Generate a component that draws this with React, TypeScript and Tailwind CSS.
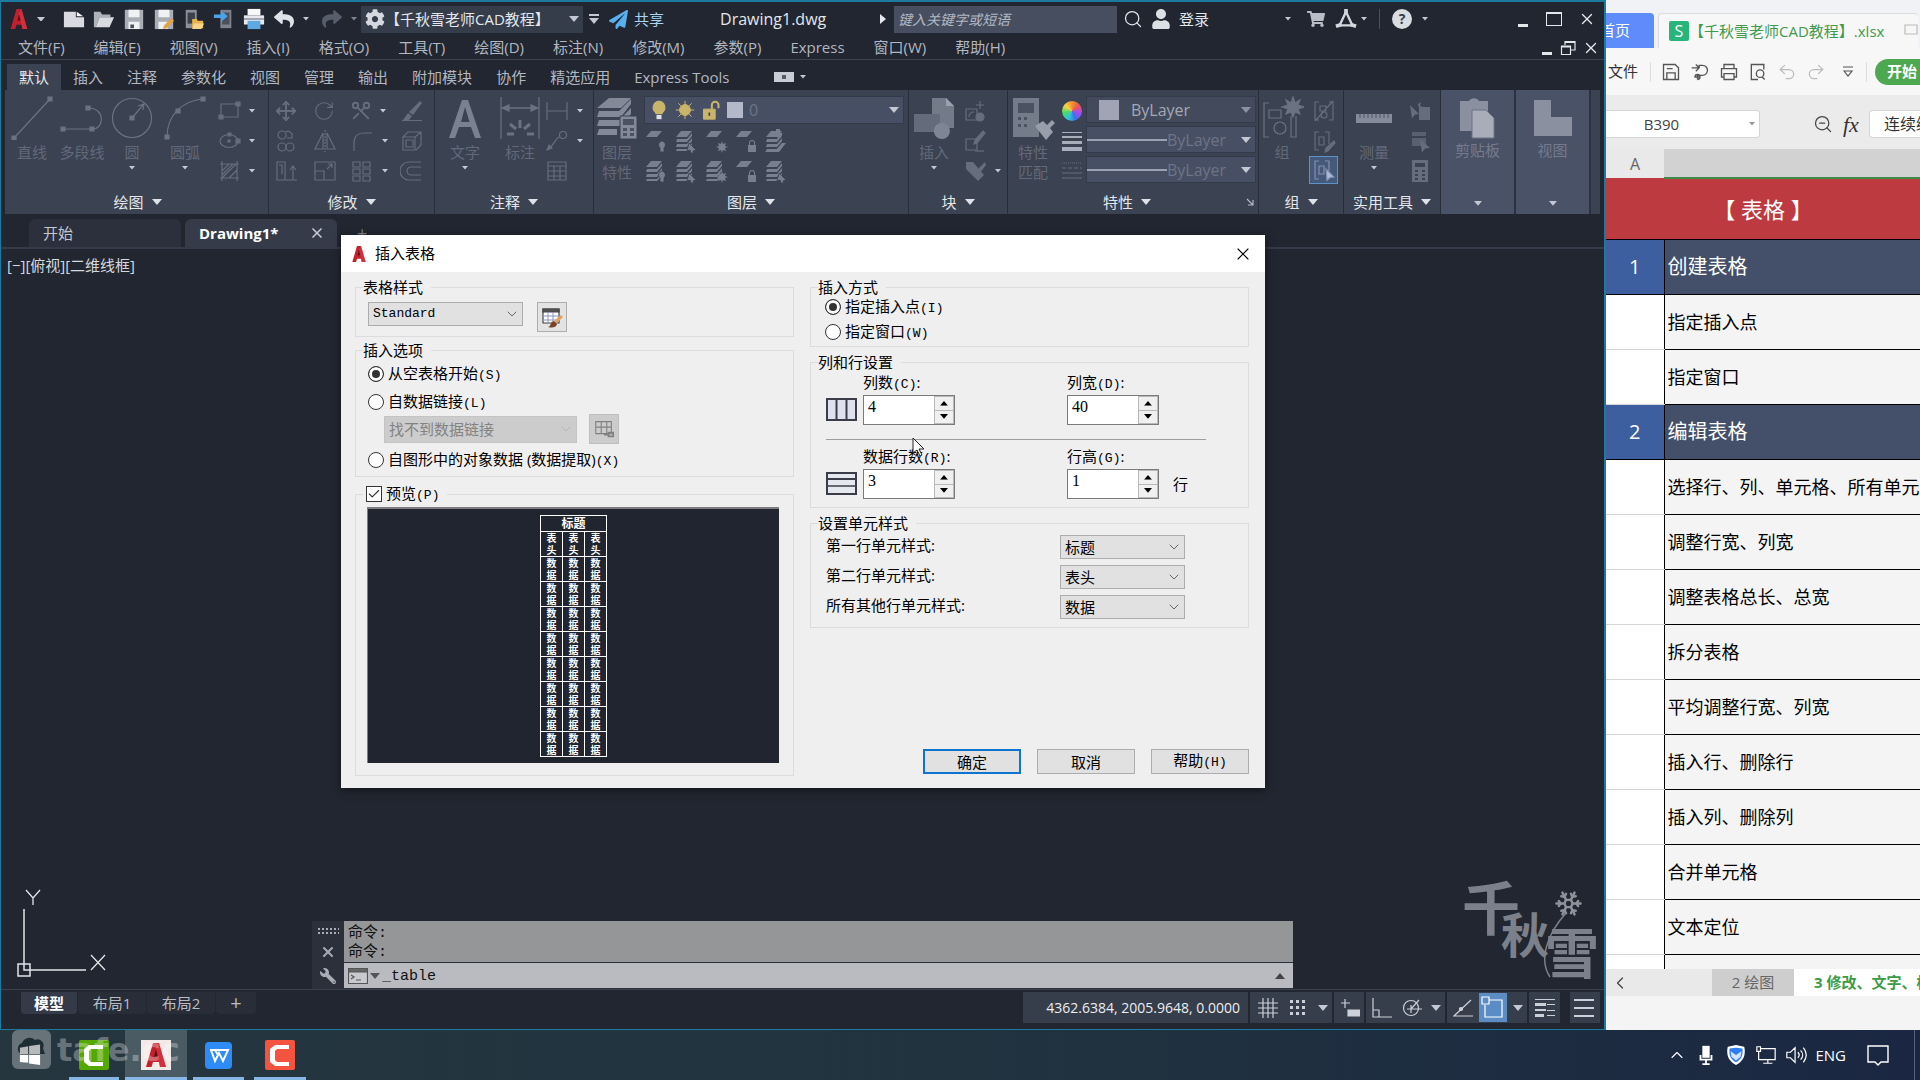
import { useState } from 'react'
import type { ReactNode } from 'react'
import { Check, ChevronDown, ChevronLeft, ChevronUp, Move, Redo2, RotateCw, Scissors, Search, Snowflake, Undo2, X, ZoomOut } from 'lucide-react'
import { FaShoppingCart, FaUser, FaReply, FaShare, FaCog, FaPaperPlane, FaWrench } from 'react-icons/fa'

type IconProps = { className?: string; children?: ReactNode; box?: string }

// outline icon, inherits colour from the parent
function Ico({ className = 'size-6', children, box = '0 0 24 24' }: IconProps) {
    return (
        <svg className={`shrink-0 ${className}`} viewBox={box} fill="none" stroke="currentColor" strokeWidth="1.2" aria-hidden="true">
            {children}
        </svg>
    )
}

// filled icon
function Solid({ className = 'size-6', children, box = '0 0 24 24' }: IconProps) {
    return (
        <svg className={`shrink-0 ${className}`} viewBox={box} fill="currentColor" aria-hidden="true">
            {children}
        </svg>
    )
}

function Caret({ className = 'w-2', color = 'text-[#c3c8d2]' }: { className?: string; color?: string }) {
    return (
        <svg className={`shrink-0 ${className} ${color}`} viewBox="0 0 10 6" fill="currentColor" aria-hidden="true">
            <path d="M0 0h10L5 6z" />
        </svg>
    )
}

function AcadLogo({ className = 'h-5 w-4' }: { className?: string }) {
    return (
        <svg className={`shrink-0 ${className}`} viewBox="0 0 20 24" aria-hidden="true">
            <path d="M7 0h6l7 24h-6l-1-5H7l-1.500 5H0z" fill="#c3202e" />
            <path d="M10 6l2 8H8z" fill="#5f0d15" />
            <path d="M13 0l7 24h-6L10 5z" fill="#e0434d" opacity=".45" />
        </svg>
    )
}

/* ---------- title bar ---------- */

const quickAccess: { name: string; icon: ReactNode }[] = [
    {
        name: '新建',
        icon: (
            <Solid className="size-5.5 text-[#d9dbe0]">
                <path d="M1 4h13v6h9v11H1z" />
                <path d="M15 4l7 5h-7z" fill="#f5f6f8" />
            </Solid>
        ),
    },
    {
        name: '打开',
        icon: (
            <Solid className="size-5.5 text-[#d9dbe0]">
                <path d="M1 4h7l2 3h9v3H7L3 21H1z" fill="#aeb2ba" />
                <path d="M7 10h16l-5 11H3z" />
            </Solid>
        ),
    },
    {
        name: '保存',
        icon: (
            <Solid className="size-5.5 text-[#a9adb5]">
                <path d="M2 2h20v21H2z" />
                <path d="M6 2h12v8H6zM6 15h12v8H6z" fill="#f0f1f3" />
                <path d="M8 18h4v4H8z" fill="#4a505c" />
            </Solid>
        ),
    },
    {
        name: '另存为',
        icon: (
            <Solid className="size-5.5 text-[#a9adb5]">
                <path d="M2 2h20v21H2z" />
                <path d="M6 2h12v8H6zM6 15h10v8H6z" fill="#f0f1f3" />
                <path d="M20 11l3 3-8 8-4 1 1-4z" fill="#e3a447" />
            </Solid>
        ),
    },
    {
        name: '从移动设备打开',
        icon: (
            <Solid className="size-5.5 text-[#8b8f98]">
                <path d="M3 2h12v20H3z" />
                <path d="M5 5h8v12H5z" fill="#3a404c" />
                <path d="M10 12h5l1 2h6v8H10z" fill="#e9b44c" />
                <path d="M12 17h11l-3 6H10z" fill="#f6d488" />
            </Solid>
        ),
    },
    {
        name: '保存到移动设备',
        icon: (
            <Solid className="size-5.5 text-[#7d828c]">
                <path d="M8 2h12v20H8z" />
                <path d="M10 5h8v13h-8z" fill="#4a505c" />
                <path d="M1 7h8V3l7 6-7 6v-4H1z" fill="#4aa3ea" />
            </Solid>
        ),
    },
    {
        name: '打印',
        icon: (
            <Solid className="size-5.5 text-[#e6e8eb]">
                <path d="M5 1h14v7H5z" fill="#f8f8f9" />
                <path d="M1 8h22v10H1z" />
                <path d="M1 11h22v2H1z" fill="#9ea3ac" />
                <path d="M5 14h14v9H5z" fill="#5fa9e2" />
            </Solid>
        ),
    },
]

function TitleBar() {
    return (
        <header className="flex h-[34px] shrink-0 items-center pl-2 text-[15px] text-[#e4e7ec]">
            <button aria-label="应用程序菜单" className="flex w-12 items-center gap-2">
                <AcadLogo className="h-5 w-5" />
                <Caret />
            </button>
            <div className="ml-0.5 flex">
                {quickAccess.map((q) => (
                    <button key={q.name} aria-label={q.name} className="flex w-[30px] justify-center">
                        {q.icon}
                    </button>
                ))}
            </div>
            <button aria-label="放弃" className="flex w-[30px] justify-center text-[#dfe2e8]">
                <FaReply className="size-5" />
            </button>
            <Caret className="ml-1 w-1.5" />
            <button aria-label="重做" className="ml-1.5 flex w-[34px] justify-center text-[#565d6b]">
                <FaShare className="size-5" />
            </button>
            <Caret className="ml-0.5 w-1.5" color="text-[#7c8391]" />
            <button className="ml-1 flex h-[27px] w-[222px] items-center bg-[#353c4a] px-1 text-left">
                <FaCog className="size-5 shrink-0 text-[#d5d8de]" />
                <span className="flex-1 whitespace-nowrap">【千秋雪老师CAD教程】</span>
                <Caret className="w-2.5" />
            </button>
            <button aria-label="自定义快速访问工具栏" className="flex w-[22px] flex-col items-center gap-0.5">
                <span className="h-0.5 w-2.5 bg-[#c3c8d2]" />
                <Caret className="w-2.5" />
            </button>
            <button className="flex items-center gap-1.5 pl-1 text-[#a9d4f5]">
                <FaPaperPlane className="size-[19px] text-[#58b0ef]" />
                共享
            </button>
            <h1 className="ml-14 w-[160px] text-base whitespace-nowrap">Drawing1.dwg</h1>
            <Solid className="h-2.5 w-1.5" box="0 0 6 10">
                <path d="M0 0l6 5-6 5z" />
            </Solid>
            <input
                aria-label="搜索"
                placeholder="键入关键字或短语"
                className="ml-2 h-[27px] w-[223px] bg-[#464e5f] px-1 text-sm italic placeholder:text-[#b3b8c2]"
            />
            <button aria-label="搜索" className="ml-1.5">
                <Search className="size-5" strokeWidth={1.5} />
            </button>
            <button className="ml-2 flex items-center gap-2">
                <FaUser className="size-5 text-[#dcdfe4]" />
                登录
            </button>
            <div className="ml-auto flex items-center">
                <Caret className="w-1.5" />
                <FaShoppingCart className="ml-4 size-[18px] text-[#b9bdc5]" />
                <Ico className="ml-2.5 size-5.5 text-[#d4d7dd]">
                    <path d="M12 4L5 19h14z" strokeWidth="2.500" />
                    <path d="M12 1v5M1 20l6-2M23 20l-6-2" strokeWidth="4" />
                </Ico>
                <Caret className="ml-1 w-1.5" />
                <span className="ml-3 h-5 w-px bg-[#4a505d]" />
                <span className="ml-3 flex size-5 items-center justify-center rounded-full bg-[#d9dce1] text-sm font-bold text-[#353c4a]">?</span>
                <Caret className="ml-2.5 w-1.5" />
            </div>
            <div className="mr-2 ml-[86px] flex items-center gap-4">
                <button aria-label="最小化" className="flex size-4 items-end">
                    <span className="ml-1 h-[3px] w-2.5 bg-[#e4e7ec]" />
                </button>
                <button aria-label="最大化" className="h-3.5 w-4 border border-t-2 border-[#e4e7ec]" />
                <button aria-label="关闭">
                    <X className="size-[18px]" strokeWidth={1.8} />
                </button>
            </div>
        </header>
    )
}

const menus = ['文件(F)', '编辑(E)', '视图(V)', '插入(I)', '格式(O)', '工具(T)', '绘图(D)', '标注(N)', '修改(M)', '参数(P)', 'Express', '窗口(W)', '帮助(H)']

function MenuBar() {
    return (
        <nav className="flex h-6 shrink-0 items-center gap-[29px] border-b border-[#3d4350] pl-[17px] text-[15px] text-[#b3b7c0]">
            {menus.map((m) => (
                <a key={m} href="#" className="whitespace-nowrap">
                    {m}
                </a>
            ))}
            <div className="mr-1 ml-auto flex items-center gap-1.5 text-[#e4e7ec]">
                <button aria-label="最小化图形" className="flex h-3.5 w-3 items-end">
                    <span className="h-[3px] w-2.5 bg-[#e4e7ec]" />
                </button>
                <button aria-label="还原图形">
                    <Ico className="size-4" box="0 0 16 16">
                        <path d="M5 5V1.500h10V10h-4M1.500 6h9v8.500h-9zM5 2.500h10M1.500 7h9" />
                    </Ico>
                </button>
                <button aria-label="关闭图形">
                    <X className="size-[18px]" strokeWidth={1.8} />
                </button>
            </div>
        </nav>
    )
}

/* ---------- ribbon ---------- */

const ribbonTabs = ['默认', '插入', '注释', '参数化', '视图', '管理', '输出', '附加模块', '协作', '精选应用', 'Express Tools']

function RibbonTabs() {
    const [active, setActive] = useState('默认')
    return (
        <div className="flex h-[30px] shrink-0 items-end pl-1.5 text-[15px] text-[#b3b7c0]">
            {ribbonTabs.map((t) => (
                <button
                    key={t}
                    onClick={() => setActive(t)}
                    className={`h-[26px] px-3 leading-[26px] whitespace-nowrap ${active === t ? 'bg-[#3b4252] text-[#e8eaee]' : ''}`}
                >
                    {t}
                </button>
            ))}
            <button aria-label="最小化功能区" className="ml-8 flex h-[26px] items-center gap-1.5">
                <span className="flex h-2.5 w-5 items-center justify-center bg-[#c9ccd3]">
                    <span className="size-1 bg-[#555b68]" />
                </span>
                <Caret className="w-1.5" />
            </button>
        </div>
    )
}

function Panel({ title, width, children, corner }: { title: string; width: string; children: ReactNode; corner?: boolean }) {
    return (
        <section className={`flex shrink-0 flex-col border-r border-[#272d39] ${width}`}>
            <div className="flex flex-1 gap-1 pt-1.5">{children}</div>
            <div className="flex h-6 items-center justify-center">
                <button className="flex flex-1 items-center justify-center gap-2 text-[15px] whitespace-nowrap text-[#e4e7ec]">
                    {title}
                    <Caret className="w-2.5" color="text-[#dfe2e8]" />
                </button>
                {corner && (
                    <Ico className="mr-1 size-2 text-[#b3b7c0]" box="0 0 8 8">
                        <path d="M1 1l6 6M7 2v5H2" />
                    </Ico>
                )}
            </div>
        </section>
    )
}

function BigTool({ label, label2, caret, width = 'w-[50px]', children }: { label: string; label2?: string; caret?: boolean; width?: string; children: ReactNode }) {
    return (
        <button className={`flex shrink-0 flex-col items-center text-[#6b7280] ${width}`}>
            {children}
            <span className="mt-0.5 text-[15px] leading-5 whitespace-nowrap text-[#626978]">{label}</span>
            {label2 && <span className="text-[15px] leading-5 text-[#626978]">{label2}</span>}
            {caret && <Caret className="mt-1 w-1.5" />}
        </button>
    )
}

function SmallTool({ caret, children, name }: { caret?: boolean; children: ReactNode; name: string }) {
    return (
        <button aria-label={name} className="flex h-[30px] items-center gap-2 text-[#666d7c]">
            {children}
            {caret && <Caret className="w-1.5" />}
        </button>
    )
}

// marks: what sits at the lower right of the sheet(s)
type LayerMark = 'bulb' | 'arrow' | 'sun' | 'lock' | 'up'

function LayerIcon({ stack, mark }: { stack: boolean; mark: LayerMark }) {
    return (
        <Solid className="size-6 text-[#787f8d]">
            <path d="M7 2h11l-5 6H2z" />
            {stack && <path d="M3 10h10l5-6v3l-5 6H2zM3 15h10l5-6v3l-5 6H2zM3 20h10l5-6v3l-5 5H2z" />}
            {mark === 'bulb' && <path d="M18 12a4 4 0 0 1 2 7v4h-4v-4a4 4 0 0 1 2-7z" stroke="#3b4252" strokeWidth=".8" />}
            {mark === 'arrow' && <path d="M15 14l7 7-3 1 1 2h-3l-1-3-3 1z" stroke="#3b4252" strokeWidth=".8" />}
            {mark === 'sun' && <path d="M18 12l1 3 3-1-1 3 3 1-3 1 1 3-3-1-1 3-1-3-3 1 1-3-3-1 3-1-1-3 3 1z" />}
            {mark === 'lock' && <path d="M14 16h1v-2a3 3 0 0 1 6 0v2h1v7h-8zM16 16h4v-2a2 2 0 0 0-4 0z" fillRule="evenodd" />}
            {mark === 'up' && <path d="M1 23h14l7-9h-4l-5 6H4zM12 0h4v4h3l-5 5-5-5h3z" />}
        </Solid>
    )
}

const layerTools: { name: string; stack: boolean; mark: LayerMark }[] = [
    { name: '关', stack: false, mark: 'bulb' },
    { name: '隔离', stack: true, mark: 'arrow' },
    { name: '冻结', stack: false, mark: 'sun' },
    { name: '锁定', stack: false, mark: 'lock' },
    { name: '置为当前', stack: true, mark: 'up' },
    { name: '打开所有图层', stack: true, mark: 'bulb' },
    { name: '取消隔离', stack: true, mark: 'arrow' },
    { name: '解冻所有图层', stack: true, mark: 'sun' },
    { name: '解锁', stack: false, mark: 'lock' },
    { name: '匹配图层', stack: true, mark: 'arrow' },
]

function PropSelect({ label, line }: { label: string; line?: boolean }) {
    return (
        <div className={`flex h-[27px] items-center border border-[#333a49] pr-1 ${line ? 'bg-[#474f64] text-[#6d7485]' : 'bg-[#424a5b] text-[#a3a8b4]'}`}>
            {line ? <span className="h-0.5 w-20 shrink-0 bg-[#9aa1b4]" /> : <span className="mr-3 ml-3 h-5 w-5 shrink-0 bg-[#a0a4b4]" />}
            <select aria-label={label} className="min-w-0 flex-1 appearance-none text-base leading-5">
                <option>ByLayer</option>
            </select>
            <Caret className="w-2.5" color={line ? undefined : 'text-[#8a91a2]'} />
        </div>
    )
}

function CollapsedPanel({ label, children }: { label: string; children: ReactNode }) {
    return (
        <button className="flex w-[75px] shrink-0 flex-col items-center border-r-2 border-[#2b3240] bg-[#4a5268] pt-1.5">
            <Solid className="size-11 text-[#8a90a0]" box="0 0 44 44">
                {children}
            </Solid>
            <span className="text-[15px] leading-5 text-[#747b8d]">{label}</span>
            <Caret className="mt-auto mb-2 w-2" />
        </button>
    )
}

function Ribbon() {
    return (
        <div className="mr-1 ml-1 flex h-[124px] shrink-0 overflow-hidden bg-[#3b4252] pl-0.5">
            <Panel title="绘图" width="w-[262px]">
                <div className="flex">
                    <BigTool label="直线">
                        <Ico className="size-11" box="0 0 44 44">
                            <path d="M4 42L40 3" />
                            <path d="M38 1h4v4h-4zM2 40h4v4H2z" fill="currentColor" />
                        </Ico>
                    </BigTool>
                    <BigTool label="多段线">
                        <Ico className="size-11" box="0 0 44 44">
                            <path d="M3 33h30M28 12c18 0 16 21 5 21" />
                            <path d="M1 31h4v4H1zM26 10h4v4h-4zM30 31h4v4h-4z" fill="currentColor" />
                        </Ico>
                    </BigTool>
                    <BigTool label="圆" caret>
                        <Ico className="size-11" box="0 0 44 44">
                            <circle cx="22" cy="22" r="19.500" />
                            <path d="M22 22L33 9M28 10l6-2-1 6" />
                            <path d="M20 20h4v4h-4z" fill="currentColor" />
                        </Ico>
                    </BigTool>
                    <BigTool label="圆弧" caret width="w-[56px]">
                        <Ico className="size-11" box="0 0 44 44">
                            <path d="M4 41C4 20 18 5 40 3" />
                            <path d="M2 39h4v4H2zM13 13h4v4h-4zM38 1h4v4h-4z" fill="currentColor" />
                        </Ico>
                    </BigTool>
                </div>
                <div className="flex flex-col">
                    <SmallTool name="矩形" caret>
                        <Ico>
                            <path d="M4 5h17v13H4z" />
                            <path d="M2 16h4v4H2zM19 3h4v4h-4z" fill="currentColor" />
                        </Ico>
                    </SmallTool>
                    <SmallTool name="椭圆" caret>
                        <Ico>
                            <ellipse cx="12" cy="12" rx="9" ry="6.500" />
                            <path d="M11 4h3v3h-3zM11 11h2v2h-2zM19 10h4v4h-4z" fill="currentColor" />
                        </Ico>
                    </SmallTool>
                    <SmallTool name="图案填充" caret>
                        <Ico>
                            <path d="M5 2v20M20 2v20M3 5h19M3 19h19M5 12l7-7M5 19L19 5M12 19l8-8M5 16L16 5" />
                        </Ico>
                    </SmallTool>
                </div>
            </Panel>

            <Panel title="修改" width="w-[166px]">
                <div className="grid flex-1 grid-cols-[38px_37px_50px_1fr] content-start pl-1.5">
                    <SmallTool name="移动"><Move className="size-5.5" strokeWidth={2} /></SmallTool>
                    <SmallTool name="旋转"><RotateCw className="size-5.5" strokeWidth={1.2} /></SmallTool>
                    <SmallTool name="修剪" caret><Scissors className="size-5.5 rotate-90" strokeWidth={2} /></SmallTool>
                    <SmallTool name="删除">
                        <Solid><path d="M20 2l2 2-9 12-4-3zM8 14l4 3-3 4H3z" /><path d="M2 21h20v1H2z" /></Solid>
                    </SmallTool>
                    <SmallTool name="复制">
                        <Ico><circle cx="7" cy="6" r="4" /><circle cx="7" cy="18" r="4" /><path d="M17 4v5h-5M17 5c-3-4-5-3-6-2M15 14a4 4 0 1 1 0 8 4 4 0 0 1 0-8z" /></Ico>
                    </SmallTool>
                    <SmallTool name="镜像">
                        <Ico><path d="M10 4v16H2zM14 4v16h8z" /><path d="M12 1v22" strokeDasharray="2 1" /></Ico>
                    </SmallTool>
                    <SmallTool name="圆角" caret>
                        <Ico><path d="M4 22V14C4 7 8 4 14 4h8" /></Ico>
                    </SmallTool>
                    <SmallTool name="分解">
                        <Ico><path d="M3 8h12v13H3zM3 8l5-5h13v13l-5 5M6 11h7v7H6zM15 8l6-5" /></Ico>
                    </SmallTool>
                    <SmallTool name="拉伸">
                        <Ico><path d="M2 3h8v18H2zM10 21h12M18 8v13M15 11l3-4 3 4M4 6h3v9" /></Ico>
                    </SmallTool>
                    <SmallTool name="缩放">
                        <Ico><path d="M2 3h20v18H2zM2 12h9v9M14 10l5-5M15 5h4v4" /></Ico>
                    </SmallTool>
                    <SmallTool name="阵列" caret>
                        <Ico><path d="M3 3h7v5H3zM13 3h7v5h-7zM3 10h7v5H3zM13 10h7v5h-7zM3 17h7v5H3zM13 17h7v5h-7z" /></Ico>
                    </SmallTool>
                    <SmallTool name="偏移">
                        <Ico><path d="M21 3H9a9 9 0 0 0 0 18h12M21 8H11a4 4 0 0 0 0 8h10" /></Ico>
                    </SmallTool>
                </div>
            </Panel>

            <Panel title="注释" width="w-[159px]">
                <BigTool label="文字" caret width="w-[60px]">
                    <Solid className="size-11 text-[#7b828f]" box="0 0 44 44">
                        <path d="M19 4h6l13 38h-6l-4-11H16l-4 11H6zM18 26h8.500L22 11z" />
                    </Solid>
                </BigTool>
                <BigTool label="标注" width="w-[42px]">
                    <Ico className="size-11" box="0 0 44 44">
                        <path d="M3 1v42M41 1v42" />
                        <path d="M5 12h34" strokeWidth="1.500" />
                        <path d="M4 12l7-3v6zM40 12l-7-3v6z" fill="currentColor" />
                        <path d="M9 38h7M12 28l6 5M22 24v8M32 28l-6 5M36 38h-7" strokeWidth="3" />
                    </Ico>
                </BigTool>
                <div className="flex flex-col">
                    <SmallTool name="线性" caret>
                        <Ico><path d="M2 3v18M22 3v18M2 12h20" /></Ico>
                    </SmallTool>
                    <SmallTool name="引线" caret>
                        <Ico><circle cx="18" cy="6" r="3.500" /><path d="M15 8c-5 0-4 7-12 12" /><path d="M2 21l2-5 3 3z" fill="currentColor" /></Ico>
                    </SmallTool>
                    <SmallTool name="表格">
                        <Ico><path d="M3 3h18v18H3zM3 7h18M3 12h18M3 17h18M9 7v14M15 7v14" /></Ico>
                    </SmallTool>
                </div>
            </Panel>

            <Panel title="图层" width="w-[315px]">
                <BigTool label="图层" label2="特性" width="w-[46px]">
                    <Solid className="size-11 text-[#838996]" box="0 0 44 44">
                        <path d="M14 2h22L26 12H2zM4 15h20l12-12v5L26 21H2zM4 24h20l12-12v6L26 30H2zM4 33h18v6H2z" />
                        <path d="M25 20h17v23H25z" stroke="#3b4252" />
                        <path d="M28 23h11v6H28zM28 32h4v3h-4zM35 32h4v3h-4zM28 37h4v3h-4zM35 37h4v3h-4z" fill="#4b5262" />
                    </Solid>
                </BigTool>
                <div className="flex-1 pr-1">
                    <div className="flex h-7 items-center gap-1.5 border border-[#333a49] bg-[#474f64] px-1">
                        <Solid className="size-5 text-[#c8b46a]">
                            <path d="M12 1a8 8 0 0 1 5 14l-1 2H8l-1-2a8 8 0 0 1 5-14z" />
                            <path d="M9 18h6v5H9z" fill="#dfe2e8" />
                        </Solid>
                        <Ico className="size-5 text-[#c8b46a]">
                            <circle cx="12" cy="12" r="6.500" fill="currentColor" />
                            <path d="M12 1v22M1 12h22M4 4l16 16M20 4L4 20" />
                        </Ico>
                        <Ico className="size-5 text-[#c8b46a]">
                            <path d="M3 11h14v12H3z" fill="currentColor" />
                            <path d="M13 11V6a4 4 0 0 1 8 0v4" strokeWidth="2.500" />
                            <path d="M9 15h2v4H9z" fill="#3b4252" stroke="none" />
                        </Ico>
                        <span className="size-4 bg-[#b4b9ca]" />
                        <select aria-label="图层" className="min-w-0 flex-1 appearance-none text-base leading-5 text-[#6d7485]">
                            <option>0</option>
                        </select>
                        <Caret className="w-2.5" />
                    </div>
                    <div className="grid w-[150px] grid-cols-5 pt-0.5">
                        {layerTools.map((t) => (
                            <SmallTool key={t.name} name={t.name}>
                                <LayerIcon stack={t.stack} mark={t.mark} />
                            </SmallTool>
                        ))}
                    </div>
                </div>
            </Panel>

            <Panel title="块" width="w-[99px]">
                <BigTool label="插入" caret width="w-[50px]">
                    <Solid className="size-11 text-[#737a88]" box="0 0 44 44">
                        <path d="M20 2h14l8 8v22H20z" />
                        <path d="M34 2l8 8h-8z" fill="#9aa0ac" />
                        <path d="M2 18h26v18H2z" fill="#646b7a" />
                        <path d="M26 28a8 8 0 1 1 0 14 8 8 0 0 1 0-14z" fill="#7f8693" />
                    </Solid>
                </BigTool>
                <div className="flex flex-col">
                    <SmallTool name="创建块">
                        <Ico><path d="M3 10h11v11H3zM17 2v8M13 6h8M6 18c0-4 3-5 5-5" /><circle cx="17" cy="18" r="4" fill="currentColor" /></Ico>
                    </SmallTool>
                    <SmallTool name="编辑块">
                        <Ico><path d="M3 10h11v11H3z" /><path d="M20 2l2 2-8 10-3 1 1-4z" fill="currentColor" /><path d="M12 22h9" /></Ico>
                    </SmallTool>
                    <SmallTool name="编辑属性" caret>
                        <Solid><path d="M3 3h7l11 13-6 6L3 10z" /><path d="M22 3l-8 8 3 3 6-8z" /></Solid>
                    </SmallTool>
                </div>
            </Panel>

            <Panel title="特性" width="w-[251px]" corner>
                <BigTool label="特性" label2="匹配" width="w-[50px]">
                    <Solid className="size-11 text-[#747b89]" box="0 0 44 44">
                        <path d="M2 2h26v39H2z" />
                        <path d="M7 7h16v10H7zM7 21h3v3H7zM13 21h3v3h-3zM7 28h3v3H7zM13 28h3v3h-3z" fill="#4b5262" />
                        <path d="M24 30l8-5 4 4 5-5 3 3-5 5 3 4-7 8z" fill="#989eaa" />
                    </Solid>
                </BigTool>
                <div className="flex flex-col">
                    <SmallTool name="对象颜色">
                        <span className="size-5 rounded-full bg-[conic-gradient(#f0932b,#eb5757,#a64bf4,#3f6fe8,#2dc7d8,#4cd964,#f5d547,#f0932b)]" />
                    </SmallTool>
                    <SmallTool name="线宽">
                        <Solid className="size-5 text-[#a9aebb]" box="0 0 20 20">
                            <path d="M0 1h20v1H0zM0 5h20v2H0zM0 10h20v3H0zM0 16h20v4H0z" />
                        </Solid>
                    </SmallTool>
                    <SmallTool name="线型">
                        <Ico className="size-5" box="0 0 20 20">
                            <path d="M0 2h20" strokeDasharray="1 1" />
                            <path d="M0 7h20" strokeDasharray="4 2" />
                            <path d="M0 12h20M0 17h20" />
                        </Ico>
                    </SmallTool>
                </div>
                <div className="flex flex-1 flex-col gap-[3px] pr-0.5">
                    <PropSelect label="颜色" />
                    <PropSelect label="线宽" line />
                    <PropSelect label="线型" line />
                </div>
            </Panel>

            <Panel title="组" width="w-[85px]">
                <BigTool label="组" width="w-[46px]">
                    <Ico className="size-11" box="0 0 44 44">
                        <path d="M9 7H4v34h5M31 20v21h5V20M9 14h12v8H9z" />
                        <circle cx="20" cy="32" r="6" />
                        <path d="M33 1l2 6 5-3-2 5 6 2-6 2 2 5-5-2-2 5-2-5-5 2 2-5-6-2 6-2-2-5 5 3z" fill="currentColor" />
                    </Ico>
                </BigTool>
                <div className="flex flex-col items-center">
                    <SmallTool name="解除编组">
                        <Ico><path d="M7 3H3v18h4M17 3h4v18h-4M8 7h6v5H8zM3 22L21 2" /><circle cx="12" cy="16" r="3" /></Ico>
                    </SmallTool>
                    <SmallTool name="组编辑">
                        <Ico><path d="M7 3H3v18h4M13 3h4v12M7 8h5v8H7z" /><path d="M22 12l1 2-7 8-3 1 1-4z" fill="currentColor" /></Ico>
                    </SmallTool>
                    <button aria-label="启用组选择" className="flex h-7 w-[29px] items-center justify-center border border-[#5d93c6] bg-[#45597a] text-[#8391ad]">
                        <Ico><path d="M7 3H3v18h4M13 3h4v10M7 8h5v8H7z" /><path d="M14 11l8 8-4 .5-3 3z" fill="#a9bcda" /></Ico>
                    </button>
                </div>
            </Panel>

            <Panel title="实用工具" width="w-[97px]">
                <BigTool label="测量" caret width="w-[60px]">
                    <Solid className="size-11 text-[#858b98]" box="0 0 44 44">
                        <path d="M4 18h36v9H4z" />
                        <path d="M8 18v4M12 18v4M16 18v4M20 18v4M24 18v4M28 18v4M32 18v4M36 18v4" stroke="#4b5262" strokeWidth="1" />
                    </Solid>
                </BigTool>
                <div className="flex flex-col">
                    <SmallTool name="快速选择">
                        <Solid><path d="M2 6l9 9-4 .5-3 4zM9 2l1 3 3-2-1 4 3 1-4 1z" /><path d="M11 8h11v13H11z" /></Solid>
                    </SmallTool>
                    <SmallTool name="全部选择">
                        <Solid><path d="M4 3h14v4H4zM4 9h14v8H4z" opacity=".7" /><path d="M12 10l10 9-5 .5-3 4z" /></Solid>
                    </SmallTool>
                    <SmallTool name="快速计算器">
                        <Solid><path d="M4 1h16v22H4z" /><path d="M7 4h10v4H7zM7 11h3v2H7zM14 11h3v2h-3zM7 15h3v2H7zM14 15h3v2h-3zM7 19h3v2H7zM14 19h3v2h-3z" fill="#3b4252" /></Solid>
                    </SmallTool>
                </div>
            </Panel>

            <CollapsedPanel label="剪贴板">
                <path d="M4 5h9a6 6 0 0 1 10 0h9v30H4z" />
                <path d="M16 14h14l8 8v20H16z" fill="#a9adba" stroke="#6b7283" />
            </CollapsedPanel>
            <CollapsedPanel label="视图">
                <path d="M3 4h17v17h21v19H3z" />
            </CollapsedPanel>
        </div>
    )
}

/* ---------- insert table dialog ---------- */

function Key({ k }: { k: string }) {
    return <span className="font-['Liberation_Mono',monospace] text-[13px]">({k})</span>
}

function Group({ legend, className = '', children }: { legend: ReactNode; className?: string; children: ReactNode }) {
    return (
        <fieldset className={`min-w-0 border border-[#dcdcdc] pl-[11px] ${className}`}>
            <legend className="-ml-1 flex h-[22px] items-center pr-2 leading-[22px]">{legend}</legend>
            {children}
        </fieldset>
    )
}

function Radio({ name, label, k, defaultChecked }: { name: string; label: string; k: string; defaultChecked?: boolean }) {
    return (
        <label className="flex h-[25px] items-center gap-1 whitespace-nowrap">
            <input
                type="radio"
                name={name}
                defaultChecked={defaultChecked}
                className="size-4 shrink-0 appearance-none rounded-full border border-[#333] bg-white checked:bg-[#333] checked:shadow-[inset_0_0_0_3px_white]"
            />
            <span>
                {label}
                <Key k={k} />
            </span>
        </label>
    )
}

function Combo({ id, value, width, label, disabled, mono }: { id: string; value: string; width: string; label?: string; disabled?: boolean; mono?: boolean }) {
    return (
        <div className={`grid items-center border ${width} ${disabled ? 'h-[27px] border-[#c4c4c4] bg-[#ccc] text-[#838383]' : 'h-6 border-[#adadad] bg-[#e1e1e1]'}`}>
            <select
                id={id}
                aria-label={label}
                disabled={disabled}
                className={`appearance-none pl-1 opacity-100 [grid-area:1/1] ${mono ? "font-['Liberation_Mono',monospace] text-[13px]" : 'leading-5'}`}
            >
                <option>{value}</option>
            </select>
            <ChevronDown className={`pointer-events-none mr-0.5 size-4 justify-self-end [grid-area:1/1] ${disabled ? 'text-[#b5b5b5]' : 'text-[#666]'}`} strokeWidth={1.5} />
        </div>
    )
}

function Spin({ id, initial }: { id: string; initial: number }) {
    const [value, setValue] = useState(initial)
    return (
        <div className="flex h-[30px] w-[92px] border border-[#7a7a7a] bg-white">
            <input
                id={id}
                value={value}
                onChange={(e) => setValue(Number(e.target.value) || 0)}
                className="w-[70px] pb-1.5 pl-1 font-['Liberation_Serif',serif] text-base leading-4"
            />
            <div className="flex flex-1 flex-col gap-px border border-[#b9b9b9] bg-[#b9b9b9]">
                <button aria-label="增加" onClick={() => setValue(value + 1)} className="flex flex-1 items-center justify-center bg-[#f0f0f0]">
                    <Caret className="w-2 rotate-180" color="text-black" />
                </button>
                <button aria-label="减少" onClick={() => setValue(value - 1)} className="flex flex-1 items-center justify-center bg-[#f0f0f0]">
                    <Caret className="w-2" color="text-black" />
                </button>
            </div>
        </div>
    )
}

const previewRows = ['表头', '数据', '数据', '数据', '数据', '数据', '数据', '数据', '数据']

function Preview() {
    return (
        <div className="flex h-[256px] w-[412px] justify-center border-t-2 border-l border-[#7d7d80] bg-[#21252f] pt-1.5">
            <table className="h-[242px] w-[67px] table-fixed border-collapse text-center font-bold text-white">
                <tbody>
                    <tr className="h-4">
                        <td colSpan={3} className="border border-white p-0 text-xs leading-[14px]">
                            标题
                        </td>
                    </tr>
                    {previewRows.map((r, i) => (
                        <tr key={i}>
                            {[0, 1, 2].map((c) => (
                                <td key={c} className="border border-white p-0 text-[10px] leading-3">
                                    {r[0]}
                                    <br />
                                    {r[1]}
                                </td>
                            ))}
                        </tr>
                    ))}
                </tbody>
            </table>
        </div>
    )
}

const cellStyles = [
    { id: 'first', label: '第一行单元样式:', value: '标题' },
    { id: 'second', label: '第二行单元样式:', value: '表头' },
    { id: 'others', label: '所有其他行单元样式:', value: '数据' },
]

function InsertTableDialog() {
    return (
        <div role="dialog" aria-label="插入表格" className="absolute top-[233px] left-[340px] w-[924px] bg-[#efefef] text-[15px] text-black shadow-[0_2px_8px_rgba(0,0,0,0.5)]">
            <div className="flex h-[37px] items-center bg-white pr-3 pl-2.5">
                <AcadLogo className="h-4 w-4" />
                <h2 className="ml-2">插入表格</h2>
                <button aria-label="关闭" className="ml-auto">
                    <X className="size-5" strokeWidth={1.3} />
                </button>
            </div>

            <div className="flex gap-4 pt-1 pr-4 pb-3 pl-3.5">
                <div className="w-[439px] shrink-0">
                    <Group legend="表格样式">
                        <div className="flex gap-3.5 pt-1 pb-1 pl-px">
                            <Combo id="style" label="表格样式" value="Standard" width="w-[155px]" mono />
                            <button aria-label="启动表格样式对话框" className="flex size-[30px] items-center justify-center border border-[#adadad] bg-[#e3e3e3]">
                                <Ico className="size-6">
                                    <path d="M3 4h16v14H3z" fill="#fff" stroke="#444" />
                                    <path d="M3 4h16v3H3z" fill="#555" stroke="#444" />
                                    <path d="M8 7v11M13 7v11M3 11h16M3 15h16" stroke="#8d95c4" strokeWidth="1" />
                                    <path d="M21 10l2 2-6 6-3-2z" fill="#e3a45c" stroke="none" />
                                    <path d="M8 22c3 0 2-5 6-6l3 3c-1 4-5 4-9 3z" fill="#7a4326" stroke="none" />
                                </Ico>
                            </button>
                        </div>
                    </Group>

                    <Group legend="插入选项" className="mt-0.5">
                        <div className="pb-1 pl-px">
                            <Radio name="source" label="从空表格开始" k="S" defaultChecked />
                            <div className="pt-[3px]">
                                <Radio name="source" label="自数据链接" k="L" />
                            </div>
                            <div className="flex items-center gap-3 pl-4">
                                <Combo id="link" label="数据链接" value="找不到数据链接" width="w-[193px]" disabled />
                                <button aria-label="启动数据链接管理器" disabled className="flex size-[30px] items-center justify-center border border-[#bfbfbf] bg-[#ccc] text-[#808080]">
                                    <Ico className="size-5.5">
                                        <path d="M3 4h17v13H3zM3 10h17M9 4v13M15 4v13" />
                                        <path d="M12 18h5M17 16h5v4h-5z" strokeWidth="2" />
                                    </Ico>
                                </button>
                            </div>
                            <div className="pt-[3px]">
                                <Radio name="source" label="自图形中的对象数据 (数据提取)" k="X" />
                            </div>
                        </div>
                    </Group>

                    <Group
                        className="mt-1.5"
                        legend={
                            <label className="flex items-center gap-1 pl-[3px]">
                                <span className="grid">
                                    <input type="checkbox" defaultChecked className="size-4 appearance-none border border-[#333] bg-white [grid-area:1/1]" />
                                    <Check className="pointer-events-none m-px size-3.5 text-[#333] [grid-area:1/1]" strokeWidth={2} />
                                </span>
                                <span>
                                    预览
                                    <Key k="P" />
                                </span>
                            </label>
                        }
                    >
                        <div className="pt-0.5 pb-3">
                            <Preview />
                        </div>
                    </Group>
                </div>

                <div className="flex min-w-0 flex-1 flex-col">
                    <Group legend="插入方式">
                        <div className="-mt-1 pb-0.5 pl-[3px]">
                            <Radio name="mode" label="指定插入点" k="I" defaultChecked />
                            <Radio name="mode" label="指定窗口" k="W" />
                        </div>
                    </Group>

                    <Group legend="列和行设置" className="mt-1">
                        <div className="-mt-px w-[384px] pl-1">
                            <div className="grid grid-cols-[37px_204px_1fr] items-center pb-3.5">
                                <span />
                                <label htmlFor="cols" className="leading-5">列数<Key k="C" />:</label>
                                <label htmlFor="colw" className="leading-5">列宽<Key k="D" />:</label>
                                <Ico className="h-6 w-[31px]" box="0 0 31 24">
                                    <path d="M1 1h29v21H1z" fill="#dfe1ee" stroke="#3a3d48" strokeWidth="2" />
                                    <path d="M10.500 1v21M20.500 1v21" stroke="#3a3d48" strokeWidth="2" />
                                </Ico>
                                <Spin id="cols" initial={4} />
                                <Spin id="colw" initial={40} />
                            </div>
                            <hr className="border-[#9d9d9d]" />
                            <div className="grid grid-cols-[37px_204px_1fr] items-center pt-1.5 pb-2">
                                <span />
                                <label htmlFor="rows" className="leading-5">数据行数<Key k="R" />:</label>
                                <label htmlFor="rowh" className="leading-5">行高<Key k="G" />:</label>
                                <Ico className="h-6 w-[31px]" box="0 0 31 24">
                                    <path d="M1 1h29v21H1z" fill="#e6e8f0" stroke="#3a3d48" strokeWidth="2" />
                                    <path d="M1 7h29" stroke="#3a3d48" strokeWidth="2" />
                                    <path d="M1 14h29" stroke="#3a3d48" strokeWidth="1.500" />
                                </Ico>
                                <Spin id="rows" initial={3} />
                                <div className="flex items-center gap-3.5">
                                    <Spin id="rowh" initial={1} />
                                    <span>行</span>
                                </div>
                            </div>
                        </div>
                    </Group>

                    <Group legend="设置单元样式" className="mt-1">
                        <div className="flex flex-col gap-1.5 pt-px pb-2 pl-1">
                            {cellStyles.map((s) => (
                                <div key={s.id} className="flex">
                                    <label htmlFor={s.id} className="w-[234px] leading-5">
                                        {s.label}
                                    </label>
                                    <Combo id={s.id} value={s.value} width="w-[125px]" />
                                </div>
                            ))}
                        </div>
                    </Group>

                    <div className="mt-auto flex justify-end gap-4 pb-0.5">
                        <button className="h-[25px] w-[98px] border-2 border-[#0f74cf] bg-[#e1e1e1] leading-5">确定</button>
                        <button className="h-[25px] w-[98px] border border-[#adadad] bg-[#e1e1e1] leading-5">取消</button>
                        <button className="h-[25px] w-[98px] border border-[#adadad] bg-[#e1e1e1] leading-5">
                            帮助
                            <Key k="H" />
                        </button>
                    </div>
                </div>
            </div>

            {/* mouse pointer */}
            <svg className="absolute top-[202px] left-[571px] h-5 w-3.5" viewBox="0 0 14 20" aria-hidden="true">
                <path d="M1 1v15l4-3 3 6 2-1-3-6h5z" fill="#fff" stroke="#222" strokeWidth="1" />
            </svg>
        </div>
    )
}

/* ---------- drawing area ---------- */

function FileTabs() {
    return (
        <div className="flex h-[35px] shrink-0 items-end border-b-2 border-[#343a47] pl-7 text-[15px] text-[#c3c7cf]">
            <button className="h-[28px] w-[152px] rounded-t-md bg-[#2b303c] px-3.5 text-left">开始</button>
            <div className="ml-1 flex h-[28px] w-[152px] items-center justify-between rounded-t-md bg-[#353b49] pr-3 pl-3.5">
                <button className="font-bold text-white">Drawing1*</button>
                <button aria-label="关闭图形">
                    <X className="size-4" strokeWidth={2.5} />
                </button>
            </div>
            <button aria-label="新图形" className="ml-5 pb-1 text-lg leading-5 text-[#7c828e]">
                +
            </button>
        </div>
    )
}

function CommandLine() {
    return (
        <div className="absolute bottom-0 left-[311px] flex w-[981px] bg-[#2b303b] pb-px">
            <div className="flex w-[32px] shrink-0 flex-col items-center justify-between pt-1.5 pb-1 text-[#a9adb6]">
                <span className="h-2 w-5.5 bg-[radial-gradient(#a9adb6_1px,transparent_1px)] bg-[size:4px_4px]" />
                <X className="size-4" strokeWidth={3} />
                <FaWrench className="size-4 -scale-x-100 rotate-0" />
            </div>
            <div className="flex-1">
                <div className="h-[41px] bg-[#949698] pt-[3px] pl-1 font-['Liberation_Mono','Noto_Sans_CJK_SC',monospace] text-[15px] leading-[19px] text-[#111]">
                    <p>命令:</p>
                    <p>命令:</p>
                </div>
                <div className="mt-px flex h-[25px] items-center bg-[#babbc0] px-1">
                    <Ico className="h-4 w-5 text-[#555]" box="0 0 20 16">
                        <path d="M.5.500h19v15H.500z" fill="#c9cace" />
                        <path d="M.5.500h19v3.500H.500z" fill="#666" />
                        <path d="M3 7l3 2-3 2M8 12h5" />
                    </Ico>
                    <Caret className="ml-0.5 w-2.5" color="text-[#555]" />
                    <input aria-label="命令" defaultValue="_table" className="min-w-0 flex-1 pt-1 pl-0.5 font-['Liberation_Mono',monospace] text-[15px] text-[#111]" />
                    <Caret className="mr-1 w-2.5 rotate-180" color="text-[#444]" />
                </div>
            </div>
        </div>
    )
}

function DrawingArea() {
    return (
        <main className="relative flex-1 border-b border-[#3a404c]">
            <div className="flex items-center pt-1 pl-1.5 text-[15px] leading-6 text-[#d5d8de]">[−][俯视][二维线框]</div>
            {/* UCS icon */}
            <svg className="absolute bottom-1.5 left-4 h-[94px] w-24" viewBox="0 0 96 94" fill="none" stroke="#e2e4e8" strokeWidth="1.500" aria-hidden="true">
                <path d="M7 20v61h62M1 75h12v12H1z" />
                <path d="M9 1l7 8 7-8M16 9v7M74 66l14 15M88 66L74 81" strokeWidth="1.300" />
            </svg>
            {/* studio mark */}
            <svg className="absolute right-1.5 bottom-0.5 h-[108px] w-[136px] overflow-visible" viewBox="0 0 136 108" aria-hidden="true">
                <g fill="#7b808a" fontFamily="'Noto Sans CJK SC', sans-serif" fontWeight="700">
                    <text x="0" y="51" fontSize="58">千</text>
                    <text x="39" y="74" fontSize="48">秋</text>
                    <text x="83" y="95" fontSize="54">雪</text>
                </g>
                <path d="M104 34C86 54 76 80 88 98" fill="none" stroke="#7b808a" strokeWidth="1.500" />
                <g transform="translate(92 10)">
                    <Snowflake size={29} color="#8d929b" strokeWidth={2} />
                </g>
            </svg>
            <CommandLine />
        </main>
    )
}

function StatusCell({ children, className = 'px-1.5' }: { children: ReactNode; className?: string }) {
    return <div className={`flex h-[31px] items-center bg-[#363d4b] ${className}`}>{children}</div>
}

function StatusBar() {
    return (
        <footer className="flex h-[39px] shrink-0 items-start pt-0.5 pl-5 text-[15px] text-[#b9bdc5]">
            <div className="flex gap-px">
                <button className="h-[22px] w-14 rounded-b bg-[#343a47] leading-5 font-bold text-white">模型</button>
                <button className="h-[22px] w-[68px] rounded-b bg-[#282d38] leading-5">布局1</button>
                <button className="h-[22px] w-[68px] rounded-b bg-[#282d38] leading-5">布局2</button>
                <button aria-label="新建布局" className="h-[22px] w-10 rounded-b bg-[#282d38] text-xl leading-5">+</button>
            </div>
            <div className="mr-1 ml-auto flex gap-0.5 text-[#ccd0d8]">
                <StatusCell className="w-[225px] justify-end pr-2 text-sm whitespace-nowrap text-[#eceef1]">4362.6384, 2005.9648, 0.0000</StatusCell>
                <StatusCell className="w-[82px] justify-between pr-1 pl-2">
                    <Ico className="size-5" box="0 0 20 20">
                        <path d="M5 0v20M10 0v20M15 0v20M0 5h20M0 10h20M0 15h20" />
                    </Ico>
                    <Solid className="size-4.5" box="0 0 18 18">
                        <path d="M1 1h3v3H1zM7 1h3v3H7zM13 1h3v3h-3zM1 7h3v3H1zM7 7h3v3H7zM13 7h3v3h-3zM1 13h3v3H1zM7 13h3v3H7zM13 13h3v3h-3z" />
                    </Solid>
                    <Caret className="w-2.5" />
                </StatusCell>
                <StatusCell className="w-[30px] pl-1.5">
                    <Ico className="size-5" box="0 0 20 20">
                        <path d="M5 1v9M1 5h9" />
                        <path d="M8 12h12v6H8z" fill="currentColor" />
                    </Ico>
                </StatusCell>
                <StatusCell className="w-[79px] justify-between pr-1 pl-1.5">
                    <Ico className="size-5" box="0 0 20 20">
                        <path d="M1 0v19h19M1 12h6v7" />
                    </Ico>
                    <Ico className="size-5" box="0 0 20 20">
                        <circle cx="9" cy="10" r="7.500" />
                        <path d="M9 11L17 2M5 11h15M9 7v8" />
                    </Ico>
                    <Caret className="w-2.5" />
                </StatusCell>
                <StatusCell className="w-[80px] justify-between pr-1 pl-1.5">
                    <Ico className="size-5" box="0 0 20 20">
                        <path d="M18 2L1 18h19" />
                        <circle cx="8" cy="11" r="1.500" fill="currentColor" />
                    </Ico>
                    <span className="flex h-[29px] w-7 items-center justify-center bg-[#5b8cc4] text-white">
                        <Ico className="size-6">
                            <path d="M8 4h13v17H4V9M1 1h7v7H1z" />
                        </Ico>
                    </span>
                    <Caret className="w-2.5" />
                </StatusCell>
                <StatusCell className="w-[31px] pl-1.5">
                    <Solid className="size-5" box="0 0 20 20">
                        <path d="M0 1h20v1H0zM0 5h11v3H0zM12 6h8v1h-8zM0 11h11v2H0zM12 12h8v1h-8zM0 16h9v3H0zM12 17h8v1h-8z" />
                    </Solid>
                </StatusCell>
                <StatusCell className="ml-2 w-[30px] pl-1">
                    <Solid className="size-5" box="0 0 20 20">
                        <path d="M0 1h20v2H0zM0 9h20v2H0zM0 17h20v2H0z" />
                    </Solid>
                </StatusCell>
            </div>
        </footer>
    )
}

/* ---------- spreadsheet window ---------- */

const outline: { n?: number; text: string }[] = [
    { n: 1, text: '创建表格' },
    { text: '指定插入点' },
    { text: '指定窗口' },
    { n: 2, text: '编辑表格' },
    { text: '选择行、列、单元格、所有单元格' },
    { text: '调整行宽、列宽' },
    { text: '调整表格总长、总宽' },
    { text: '拆分表格' },
    { text: '平均调整行宽、列宽' },
    { text: '插入行、删除行' },
    { text: '插入列、删除列' },
    { text: '合并单元格' },
    { text: '文本定位' },
    { text: '' },
]

function Spreadsheet() {
    return (
        <aside className="flex w-[314px] shrink-0 flex-col overflow-hidden bg-[#f4f4f4] text-[#333]">
            <div className="flex h-12 shrink-0 items-end bg-[#f1f2f6]">
                <button className="flex h-[35px] w-12 shrink-0 items-center justify-end rounded-tr bg-[#5f8cfb] pr-6 text-[15px] whitespace-nowrap text-white">首页</button>
                <button className="ml-1 flex h-[35px] shrink-0 items-center rounded-t border-t border-l border-[#ddd] bg-[#f7f7f7] pl-2.5 text-[15px] text-[#3f9b4b]">
                    <span className="flex h-5 w-5 items-center justify-center rounded-xs bg-[#27b57a] text-base leading-5 text-white">S</span>
                    <span className="whitespace-nowrap">【千秋雪老师CAD教程】.xlsx</span>
                    <Ico className="ml-5 size-3.5 text-[#bbb]" box="0 0 14 14"><path d="M1 1h12v9H1z" /></Ico>
                </button>
            </div>
            <div className="flex h-[47px] shrink-0 items-center bg-[#f7f7f7] text-[15px] text-[#555]">
                <button className="w-[34px] shrink-0 whitespace-nowrap text-[#333]">文件</button>
                <span className="ml-2.5 h-5 w-px shrink-0 bg-[#ddd]" />
                <div className="ml-2.5 flex shrink-0 items-center gap-[9px]">
                    <Ico className="size-5"><path d="M3 3h14l4 4v14H3zM7 21v-8h10v8M7 8h7" strokeWidth="1.600" /></Ico>
                    <Ico className="size-5"><path d="M2 7h8M7 3l4 4-4 4M11 7V4h4a6 6 0 0 1 0 12H9v5M9 21a3 3 0 1 0-3-3h6" strokeWidth="1.600" /></Ico>
                    <Ico className="size-5"><path d="M6 8V3h12v5M6 18H3V8h18v10h-3M6 14h12v7H6z" strokeWidth="1.600" /></Ico>
                    <Ico className="size-5"><path d="M19 9V3H4v18h8M20 21l-3-3" strokeWidth="1.600" /><circle cx="14.500" cy="14" r="4.500" strokeWidth="1.600" /></Ico>
                    <Undo2 className="size-5 text-[#bbb]" strokeWidth={1.5} />
                    <Redo2 className="size-5 text-[#bbb]" strokeWidth={1.5} />
                </div>
                <Ico className="ml-4 size-3" box="0 0 12 12"><path d="M1 1h10M2 5l4 5 4-5z" /></Ico>
                <span className="ml-3 h-5 w-px shrink-0 bg-[#ddd]" />
                <button className="ml-2 h-[26px] w-20 shrink-0 rounded-full bg-[#4ea751] px-3 text-left font-bold text-white">开始</button>
            </div>
            <div className="flex h-[54px] shrink-0 items-center bg-[#ebebeb] pt-1">
                <button className="flex h-7 w-[154px] shrink-0 items-center justify-end rounded-r border border-l-0 border-[#d5d5d5] bg-white pr-1 text-[15px] text-[#444]">
                    <span className="flex-1 pr-8 text-center">B390</span>
                    <Caret className="w-1.5" color="text-[#999]" />
                </button>
                <ZoomOut className="ml-[53px] size-5 shrink-0 text-[#444]" strokeWidth={1.5} />
                <span className="ml-2.5 font-['Liberation_Serif',serif] text-[22px] italic">fx</span>
                <div className="ml-2.5 flex h-7 w-20 shrink-0 items-center rounded-l border border-r-0 border-[#d5d5d5] bg-white pl-3.5 text-base whitespace-nowrap">连续编号</div>
            </div>

            <div className="min-h-0 flex-1 overflow-hidden">
                <table className="w-full table-fixed border-collapse text-lg text-black">
                    <colgroup>
                        <col className="w-[58px]" />
                        <col />
                    </colgroup>
                    <thead>
                        <tr className="h-[29px] text-base">
                            <th className="bg-[#e9e9e9] font-normal text-[#666]">A</th>
                            <th className="border-b-2 border-[#3d8b46] bg-[#d2d2d2]" />
                        </tr>
                        <tr className="h-[61px] border-b border-black">
                            <th colSpan={2} className="bg-[#bc3a40] text-[22px] font-normal text-white">
                                【 表格 】
                            </th>
                        </tr>
                    </thead>
                    <tbody>
                        {outline.map((row, i) =>
                            row.n ? (
                                <tr key={i} className="h-[55px] border-y border-black text-xl text-white">
                                    <td className="bg-[#3d5f9f] p-0 text-center">{row.n}</td>
                                    <td className="border-l border-black bg-[#44506a] p-0 pl-[3px]">{row.text}</td>
                                </tr>
                            ) : (
                                <tr key={i} className="h-[55px]">
                                    <td className="border-b border-[#d6d6d6] bg-white p-0" />
                                    <td className="border-b border-l border-black p-0 pl-[3px]">
                                        <div className="overflow-hidden whitespace-nowrap">{row.text}</div>
                                    </td>
                                </tr>
                            )
                        )}
                    </tbody>
                </table>
            </div>

            <div className="flex h-[27px] shrink-0 bg-[#e9e9e9] text-[15px]">
                <button aria-label="上一个" className="flex w-[106px] shrink-0 items-center pl-1 text-[#444]">
                    <ChevronLeft className="size-5" strokeWidth={1.5} />
                </button>
                <button className="w-[82px] shrink-0 bg-[#cecece] text-[#666]">2 绘图</button>
                <button className="w-[160px] shrink-0 bg-white pl-5 text-left font-bold whitespace-nowrap text-[#3c9b46]">3 修改、文字、标注</button>
            </div>
            <div className="h-[34px] shrink-0" />
        </aside>
    )
}

/* ---------- taskbar ---------- */

function CamtasiaIcon({ green }: { green?: boolean }) {
    return (
        <svg className="size-[30px]" viewBox="0 0 30 30" aria-hidden="true">
            <rect width="30" height="30" rx="2" fill={green ? '#55a800' : '#f4533f'} />
            <path d="M24 5H10L5 9v13l5 4h14v-4H12l-2-2v-9l2-2h12z" fill="#fff" />
        </svg>
    )
}

function Taskbar() {
    return (
        <div className="relative flex h-[50px] shrink-0 items-stretch bg-linear-to-r from-[#25363f] via-[#21333f] to-[#1b2742] text-white">
            <button aria-label="开始" className="flex w-[63px] items-center justify-center pr-1">
                <Solid className="size-5.5">
                    <path d="M1 4l9-1.500V11H1zM11 2.300L23 .5V11H11zM1 12h9v8.500L1 19.500zM11 12h12v11l-12-1.800z" />
                </Solid>
            </button>
            <button aria-label="Camtasia" className="flex w-[62px] items-center justify-center border-x-6 border-transparent shadow-[inset_0_-3px_#86b6e6]">
                <CamtasiaIcon green />
            </button>
            <button aria-label="AutoCAD" className="flex w-[62px] items-center justify-center bg-[#4b5b63] shadow-[inset_0_-3px_#86b6e6]">
                <span className="flex size-[30px] items-center justify-center bg-[#f3e9e7]">
                    <AcadLogo className="h-6 w-5" />
                </span>
            </button>
            <button aria-label="WPS" className="ml-1.5 flex w-[51px] items-center justify-center shadow-[inset_0_-3px_#86b6e6]">
                <svg className="size-[27px]" viewBox="0 0 27 27" aria-hidden="true">
                    <rect width="27" height="27" rx="4" fill="#2f8bf5" />
                    <path d="M5 8h18l-5 11-4-8-4 8-4-11M10 8l3 5" fill="none" stroke="#fff" strokeWidth="2" />
                </svg>
            </button>
            <button aria-label="Camtasia Recorder" className="ml-2.5 flex w-[52px] items-center justify-center shadow-[inset_0_-3px_#86b6e6]">
                <CamtasiaIcon />
            </button>

            <div className="ml-auto flex items-center border-r border-[#55617a] pr-6">
                <ChevronUp className="size-5" strokeWidth={1.3} />
                <Solid className="ml-2 size-5.5">
                    <path d="M8 2h8v13H8z" />
                    <path d="M5 12h2v4h10v-4h2v6h-6v3h3v2H8v-2h3v-3H5z" />
                </Solid>
                <svg className="ml-2 size-5.5" viewBox="0 0 24 24" aria-hidden="true">
                    <path d="M3 3l9-2 9 2c2 9-1 16-9 20C4 19 1 12 3 3z" fill="#fff" />
                    <path d="M5 5l7-1 7 1c1 7-1 12-7 15C6 17 4 12 5 5z" fill="#2f7df0" />
                    <path d="M6 8l6 4 6-4-1 6-5 4-5-4z" fill="#cfe2ff" />
                </svg>
                <Ico className="ml-2 size-5.5"><path d="M6 5h16v12H6M14 17v4M9 21h10M2 3h4v5H2zM4 8v9h3" strokeWidth="1.300" /></Ico>
                <Ico className="ml-2 size-5.5"><path d="M2 9h4l5-5v16l-5-5H2zM14 9c2 2 2 4 0 6M17 7c3 3 3 7 0 10M20 4c4 5 4 11 0 16" strokeWidth="1.300" /></Ico>
                <span className="ml-2 text-[15px]">ENG</span>
                <Ico className="ml-5 size-6"><path d="M2 3h20v16h-7l-3 3-3-3H2z" strokeWidth="1.400" /></Ico>
            </div>
            <div className="w-[5px] shrink-0" />

            {/* translucent site mark laid over the taskbar */}
            <div className="pointer-events-none absolute top-0 left-3 flex items-center opacity-30">
                <svg className="size-[39px]" viewBox="0 0 39 39" aria-hidden="true">
                    <rect width="39" height="39" rx="6" fill="#fff" />
                    <path d="M9 24a6 6 0 0 1 1-11 8 8 0 0 1 13-3 6 6 0 0 1 8 8l2 6z" fill="#10181d" />
                </svg>
                <span className="pl-1.5 font-['DejaVu_Sans',sans-serif] text-[32px] leading-9 font-bold">tafe.cc</span>
            </div>
        </div>
    )
}

export default function App() {
    return (
        <div className="flex h-screen flex-col overflow-hidden bg-[#1b2742] font-['Open_Sans','Noto_Sans_CJK_SC',sans-serif]">
            <div className="flex min-h-0 flex-1">
                <div className="relative flex min-w-0 flex-1 flex-col border border-t-2 border-r-2 border-[#1d7a9f] bg-[#212630]">
                    <TitleBar />
                    <MenuBar />
                    <RibbonTabs />
                    <Ribbon />
                    <FileTabs />
                    <DrawingArea />
                    <StatusBar />
                    <InsertTableDialog />
                </div>
                <Spreadsheet />
            </div>
            <Taskbar />
        </div>
    )
}
